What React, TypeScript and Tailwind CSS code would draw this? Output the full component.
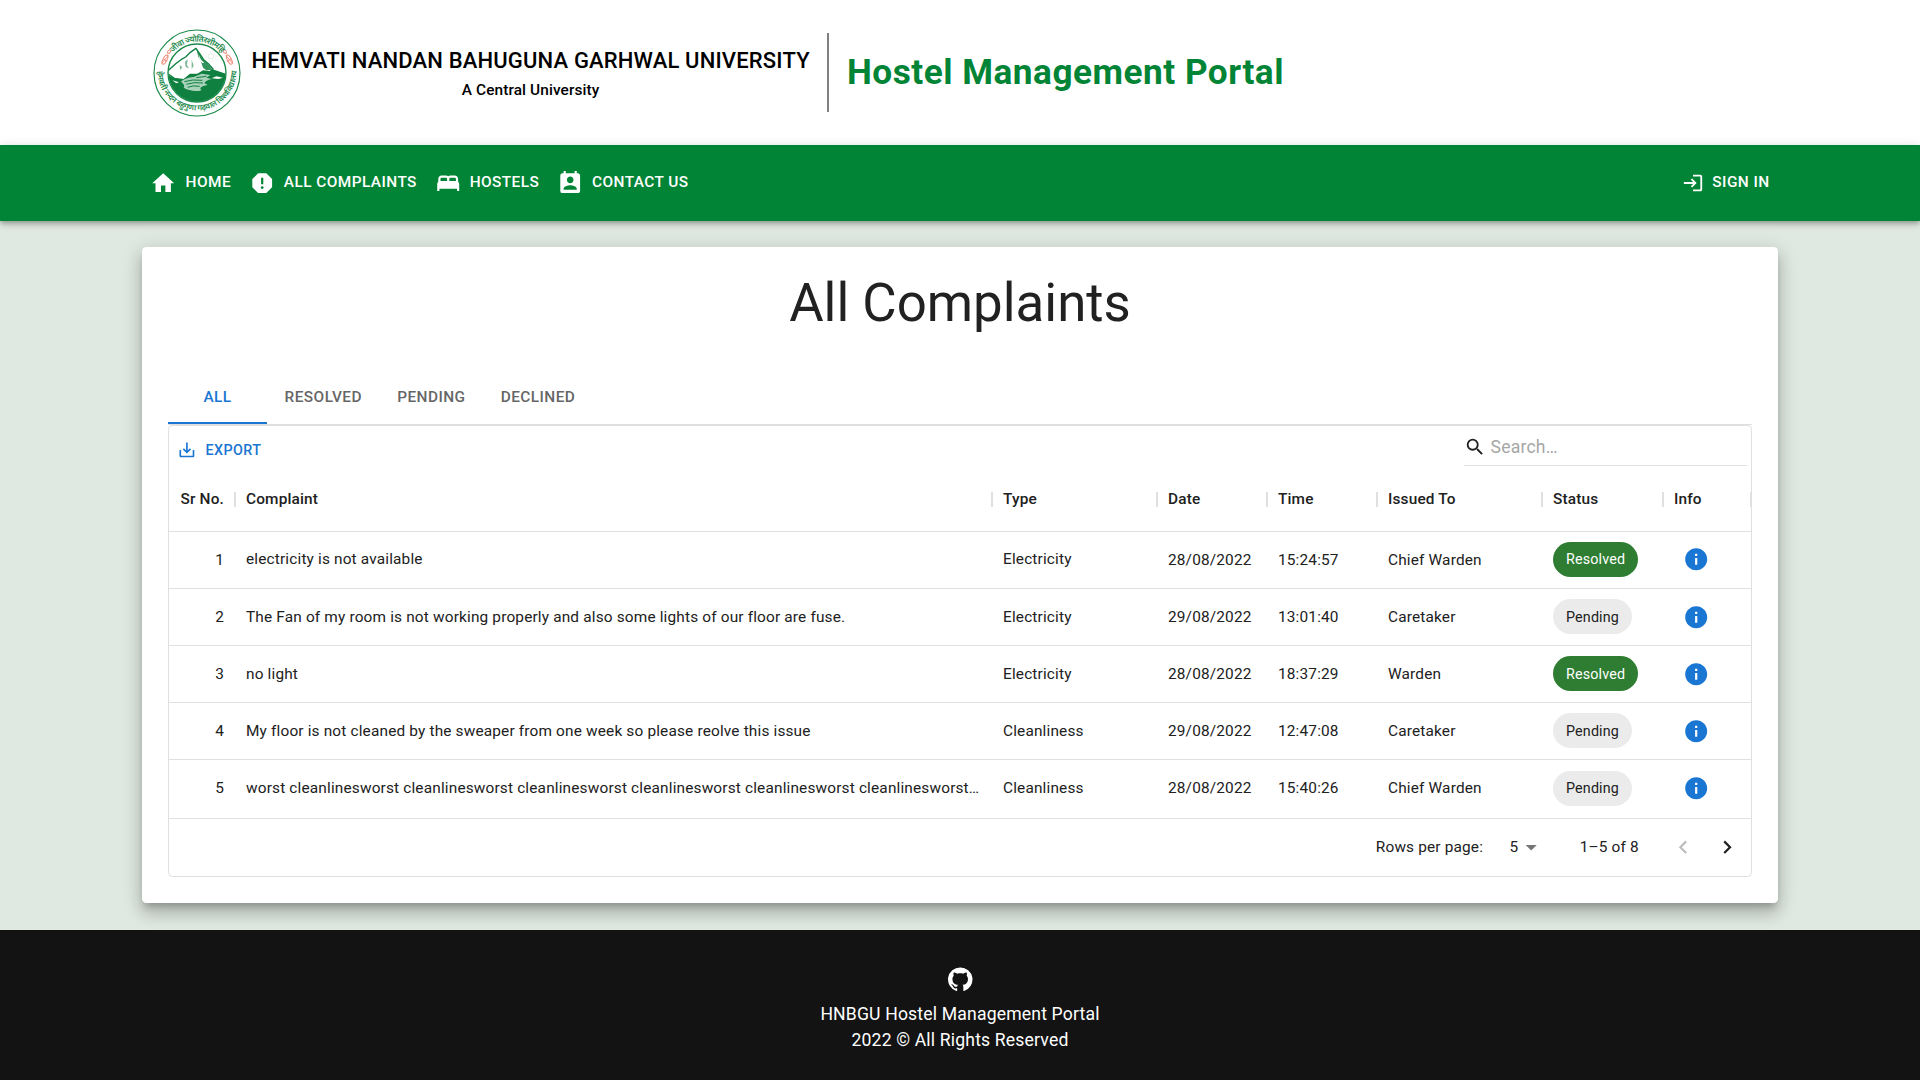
import React from "react";
import {
  MdHome,
  MdReport,
  MdBed,
  MdPermContactCalendar,
  MdLogin,
  MdSaveAlt,
  MdSearch,
  MdInfo,
  MdArrowDropDown,
  MdKeyboardArrowLeft,
  MdKeyboardArrowRight,
} from "react-icons/md";

const columns = [
  { label: "Sr No.", width: "w-[66px]" },
  { label: "Complaint", width: "w-[757px]" },
  { label: "Type", width: "w-[165px]" },
  { label: "Date", width: "w-[110px]" },
  { label: "Time", width: "w-[110px]" },
  { label: "Issued To", width: "w-[165px]" },
  { label: "Status", width: "w-[121px]" },
  { label: "Info", width: "w-[88px]" },
];

const rows = [
  { text: "electricity is not available", type: "Electricity", date: "28/08/2022", time: "15:24:57", to: "Chief Warden", status: "Resolved" },
  { text: "The Fan of my room is not working properly and also some lights of our floor are fuse.", type: "Electricity", date: "29/08/2022", time: "13:01:40", to: "Caretaker", status: "Pending" },
  { text: "no light", type: "Electricity", date: "28/08/2022", time: "18:37:29", to: "Warden", status: "Resolved" },
  { text: "My floor is not cleaned by the sweaper from one week so please reolve this issue", type: "Cleanliness", date: "29/08/2022", time: "12:47:08", to: "Caretaker", status: "Pending" },
  { text: "worst cleanlinesworst cleanlinesworst cleanlinesworst cleanlinesworst cleanlinesworst cleanlinesworst…", type: "Cleanliness", date: "28/08/2022", time: "15:40:26", to: "Chief Warden", status: "Pending" },
];

function Logo() {
  return (
    <svg viewBox="0 0 264 264" className="h-[88px] w-[88px] shrink-0">
      <defs>
        <path id="arcTop" d="M 38 132 A 94 94 0 0 1 226 132" />
        <path id="arcBottom" d="M 14 110 A 119 119 0 1 0 250 110" />
        <clipPath id="disc">
          <circle cx="132" cy="132" r="86" />
        </clipPath>
      </defs>
      <circle cx="132" cy="132" r="129" fill="#fff" stroke="#1b8a4b" strokeWidth="3.5" />
      <g clipPath="url(#disc)">
        <path d="M40 136 L60 146 L78 140 L120 132 L150 128 L176 120 L230 138 V230 H40z" fill="#0f8040" />
        <path d="M44 126 L68 104 L84 92 L98 84 L112 70 L129 58 L140 74 L152 92 L168 106 L180 120 L170 128 L150 126 L134 136 L112 136 L92 152 L64 148 L44 134z" fill="#fff" stroke="#0f8040" strokeWidth="4" strokeLinejoin="round" />
        <path d="M130 60 L136 84 L144 98 L150 116 L160 124 L178 122 L168 108 L152 92z" fill="#0f8040" opacity=".85" />
        <path d="M136 76 L144 92 L154 102 L148 102 L140 94z" fill="#fff" />
        <path d="M96 98 L104 90 L102 108 L108 118 L98 114z M80 108 L88 114 L82 124z M116 92 L122 110 L116 120z" fill="#7bb894" />
        <path d="M84 158 Q96 146 122 144 L146 134 L172 138 L160 146 L176 150 Q158 154 154 162 L164 168 Q140 172 142 180 Q150 184 138 186 Q108 186 92 176 Q98 168 84 158z" fill="#a9d2ba" />
        <path d="M94 158 Q118 150 148 154 M100 166 Q122 158 150 162 M104 175 Q120 168 140 172 M130 146 L160 142" stroke="#0f8040" strokeWidth="3" fill="none" />
        <path d="M176 148 L190 142 L210 146 L196 150z M58 154 L78 160 L70 163z" fill="#fff" />
      </g>
      <circle cx="132" cy="132" r="87" fill="none" stroke="#1b8a4b" strokeWidth="4" />
      <g stroke="#cfe2d7" strokeWidth="2" fill="none">
        <circle cx="174" cy="82" r="8" />
        <circle cx="174" cy="82" r="15" strokeDasharray="2 4" />
      </g>
      <g fill="none" stroke="#ee8b79" strokeWidth="3">
        <ellipse cx="36" cy="92" rx="6" ry="15" transform="rotate(28 36 92)" />
        <path d="M26 103 L46 80 M30 88 L42 98 M44 74 q-2 -14 10 -10 q0 10 -10 10" />
        <ellipse cx="229" cy="92" rx="6" ry="15" transform="rotate(-28 229 92)" />
        <path d="M239 103 L219 80 M235 88 L223 98 M220 74 q2 -14 -10 -10 q0 10 10 10" />
      </g>
      <g fill="#1b8a4b" fontFamily='"Noto Sans", sans-serif' fontWeight="600" fontSize="25">
        <text textAnchor="middle">
          <textPath href="#arcTop" startOffset="50%" textLength="166">जीवा ज्योतिरशीमहि</textPath>
        </text>
        <text textAnchor="middle" fontSize="24">
          <textPath href="#arcBottom" startOffset="50%" textLength="372">हेमवती नन्दन बहुगुणा गढ़वाल विश्वविद्यालय</textPath>
        </text>
      </g>
    </svg>
  );
}

function NavItem({ icon, children }: { icon: React.ReactNode; children: React.ReactNode }) {
  return (
    <a className="flex items-center gap-[8.8px] px-[8.8px] text-[15.4px] leading-[27px] font-medium tracking-[0.02857em] text-white uppercase">
      {icon}
      <span className="-mt-px">{children}</span>
    </a>
  );
}

function Chip({ status, raised }: { status: string; raised: boolean }) {
  const tone = status === "Resolved" ? "bg-[#2e7d32] text-white" : "bg-[#ebebeb] text-[#212121]";
  return (
    <span className={"flex h-[35px] items-center rounded-full px-[13px] text-[14.3px] tracking-[0.165px] " + tone + (raised ? "" : " pt-[2px]")}>
      {status}
    </span>
  );
}

export default function App() {
  return (
    <div className="flex h-[1080px] w-full flex-col overflow-hidden bg-[#dfe9e1] font-[Roboto,sans-serif] text-[#212121]">
      <header className="h-[145px] shrink-0 bg-white">
        <div className="mx-auto flex h-full w-[1636.8px] items-center pl-[11px] text-black">
          <Logo />
          <div className="ml-[10px] flex w-[560px] flex-col items-center pt-[2px]">
            <div className="text-[22px] leading-[33px] font-medium tracking-[0.0075em] whitespace-nowrap">HEMVATI NANDAN BAHUGUNA GARHWAL UNIVERSITY</div>
            <div className="text-[15.4px] leading-[26px] font-medium tracking-[0.00714em]">A Central University</div>
          </div>
          <div className="ml-[16.4px] h-[79px] w-[2px] bg-[#808080]" />
          <div className="ml-[18px] text-[35.2px] font-bold tracking-[0.5px] whitespace-nowrap text-[#028436]">Hostel Management Portal</div>
        </div>
      </header>

      <nav className="relative z-10 h-[76px] shrink-0 bg-[#028436] shadow-[0_2px_4px_-1px_rgba(0,0,0,0.2),0_4px_5px_0_rgba(0,0,0,0.14),0_1px_11px_0_rgba(0,0,0,0.12)]">
        <div className="mx-auto flex h-full w-[1636.8px] items-center">
          <NavItem icon={<MdHome size={26.4} />}>Home</NavItem>
          <NavItem icon={<MdReport size={26.4} />}>All Complaints</NavItem>
          <NavItem icon={<MdBed size={26.4} className="mr-[-0.4px] ml-[0.4px]" />}>Hostels</NavItem>
          <NavItem icon={<MdPermContactCalendar size={26.4} />}>Contact Us</NavItem>
          <div className="grow" />
          <NavItem icon={<MdLogin size={22} />}>Sign in</NavItem>
        </div>
      </nav>

      <main className="flex h-[709px] shrink-0 justify-center pt-[26px]">
        <section className="h-[656px] w-[1636.8px] rounded-[4.4px] bg-white px-[26.4px] shadow-[0_6px_7px_-3px_rgba(0,0,0,0.2),0_11px_15px_1px_rgba(0,0,0,0.14),0_4px_20px_3px_rgba(0,0,0,0.12)]">
          <h1 className="h-[124px] pt-[25px] text-center text-[52.8px] leading-[62px]">All Complaints</h1>

          <div className="flex h-[54px] border-b border-[#e0e0e0] text-[15.4px] font-medium tracking-[0.02857em] text-[#666666] uppercase">
            <div className="flex w-[99px] items-center justify-center border-b-2 border-[#1976d2] pt-[2px] text-[#1976d2]">All</div>
            <div className="flex items-center px-[17.6px]">Resolved</div>
            <div className="flex items-center px-[17.6px]">Pending</div>
            <div className="flex items-center px-[17.6px]">Declined</div>
          </div>

          <div className="flex h-[452px] flex-col overflow-hidden rounded-[4.4px] border border-[#e0e0e0] text-[15.4px] tracking-[0.01071em]">
            <div className="flex h-[44px] shrink-0 items-start justify-between pr-[4.4px] pl-[8px]">
              <div className="flex h-[47px] items-center gap-[8.8px] text-[14.3px] font-medium tracking-[0.02857em] text-[#1976d2]">
                <MdSaveAlt size={19.8} />
                <span className="pt-[2px]">EXPORT</span>
              </div>
              <div className="flex h-[40px] w-[283px] items-center border-b border-[#e0e0e0] pb-[2px] text-[17.6px] text-[#a6a6a6]">
                <MdSearch size={22} className="mt-[5px] text-[#212121]" />
                <span className="ml-[5px] pt-[5px] tracking-[0.00938em]">Search…</span>
              </div>
            </div>

            <div className="flex h-[62px] shrink-0 border-b border-[#e0e0e0] font-medium">
              {columns.map((c, i) => (
                <div key={c.label} className={"relative flex shrink-0 items-center pb-[2px] " + c.width + (i === 0 ? " justify-end pr-[11px]" : " pl-[11px]")}>
                  {c.label}
                  <span className="absolute top-[22px] right-[-1px] h-[15px] w-[2px] bg-[#e0e0e0]" />
                </div>
              ))}
            </div>

            {rows.map((r, i) => {
              const lift = i === 0 ? "" : " pt-[2px]";
              return (
                <div key={i} className={"flex shrink-0 items-center border-b border-[#e0e0e0] " + (i === 4 ? "h-[59px] pb-[2px]" : "h-[57px]")}>
                  <div className="w-[66px] pt-[2px] pr-[11px] text-right">{i + 1}</div>
                  <div className={"w-[757px] pl-[11px] whitespace-nowrap" + lift}>{r.text}</div>
                  <div className={"w-[165px] px-[11px]" + lift}>{r.type}</div>
                  <div className="w-[110px] pt-[2px] pl-[11px]">{r.date}</div>
                  <div className="w-[110px] pt-[2px] pl-[11px]">{r.time}</div>
                  <div className="w-[165px] px-[11px] pt-[2px]">{r.to}</div>
                  <div className={"flex w-[121px] px-[11px]" + (i === 4 ? "" : " pb-px")}>
                    <Chip status={r.status} raised={i === 0} />
                  </div>
                  <div className={"flex w-[88px] pl-[19.8px]" + (i === 0 ? " pb-px" : "")}>
                    <MdInfo size={26.4} className="text-[#1976d2]" />
                  </div>
                </div>
              );
            })}

            <div className="flex grow items-center justify-end pr-[11px]">
              <span>Rows per page:</span>
              <span className="ml-[26.4px]">5</span>
              <MdArrowDropDown size={26.4} className="text-[#757575]" />
              <span className="ml-[35px]">1–5 of 8</span>
              <MdKeyboardArrowLeft size={26.4} className="ml-[30.8px] text-[#bdbdbd]" />
              <MdKeyboardArrowRight size={26.4} className="ml-[17.6px]" />
            </div>
          </div>
        </section>
      </main>

      <footer className="flex h-[150px] shrink-0 flex-col items-center bg-[#131313] pt-[36px] text-[17.6px] leading-[26.4px] tracking-[0.00938em] text-white">
        <svg viewBox="0 0 24 24" className="mb-[8.2px] h-[26.4px] w-[26.4px]" fill="currentColor">
          <path d="M12 1.27a11 11 0 00-3.48 21.46c.55.09.73-.28.73-.55v-1.84c-3.03.64-3.67-1.46-3.67-1.46-.55-1.29-1.28-1.65-1.28-1.65-.92-.65.1-.65.1-.65 1.1 0 1.73 1.1 1.73 1.1.92 1.65 2.57 1.2 3.21.92a2 2 0 01.64-1.47c-2.47-.27-5.04-1.19-5.04-5.5 0-1.1.46-2.1 1.2-2.84a3.76 3.76 0 010-2.93s.91-.28 3.11 1.1c1.8-.49 3.7-.49 5.5 0 2.1-1.38 3.02-1.1 3.02-1.1a3.76 3.76 0 01.1 2.93c.83.74 1.2 1.74 1.2 2.94 0 4.21-2.57 5.13-5.04 5.4.45.37.82.92.82 2.02v3.03c0 .27.1.64.73.55A11 11 0 0012 1.27" />
        </svg>
        <div>HNBGU Hostel Management Portal</div>
        <div>2022 © All Rights Reserved</div>
      </footer>
    </div>
  );
}
